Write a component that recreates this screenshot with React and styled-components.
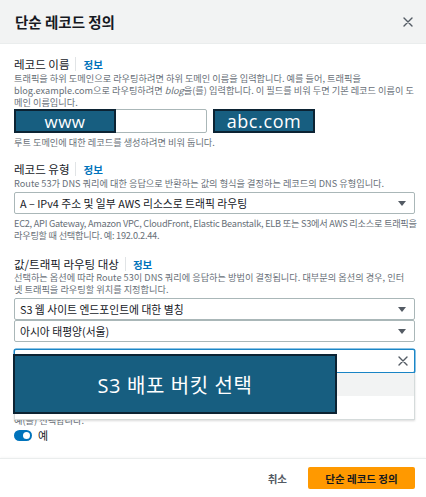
import React from "react";
import styled, { createGlobalStyle } from "styled-components";

const GlobalStyle = createGlobalStyle`
  body {
    margin: 0;
    background: #ffffff;
    font-family: "Noto Sans CJK KR", "Open Sans", sans-serif;
    color: #16191f;
  }
`;

const Modal = styled.div`
  width: 426px;
  height: 497px;
  display: flex;
  flex-direction: column;
  overflow: hidden;
`;

const Header = styled.div`
  height: 43px;
  flex-shrink: 0;
  display: flex;
  align-items: center;
  justify-content: space-between;
  padding: 0 13px 0 15px;
  background: #f2f3f3;
  border-bottom: 1px solid #eaeded;
`;

const Title = styled.h2`
  margin: 0;
  font-size: 14.5px;
  font-weight: 700;
  font-family: "Noto Sans CJK KR", sans-serif;
  color: #16191f;
`;

const CloseButton = styled.button`
  border: none;
  background: none;
  padding: 0;
  display: flex;
  cursor: pointer;
`;

const Body = styled.div`
  flex: 1;
  padding: 0 11px 0 14px;
`;

const Field = styled.div`
  margin-top: ${({ top }) => top}px;
`;

const LabelRow = styled.div`
  display: flex;
  align-items: center;
  height: 14px;
`;

const Label = styled.span`
  font-size: 11.5px;
  color: #16191f;
  font-family: "Noto Sans CJK KR", sans-serif;
`;

const Divider = styled.span`
  width: 1px;
  height: 14px;
  background: #e1e4e6;
  margin: 0 7px 0 6px;
`;

const InfoLink = styled.a`
  font-size: 10.5px;
  font-weight: 700;
  color: #0073bb;
  font-family: "Noto Sans CJK KR", sans-serif;
`;

const Desc = styled.div`
  font-size: 9.2px;
  line-height: 12px;
  color: #687078;
  white-space: nowrap;
  letter-spacing: ${({ tight }) => (tight ? "-0.25px" : "0")};
  font-family: "Noto Sans CJK KR", sans-serif;
  margin-top: ${({ top }) => top || 0}px;
`;

const InputRow = styled.div`
  display: flex;
  align-items: center;
  gap: 6px;
  margin-top: 1px;
`;

const InputBox = styled.div`
  position: relative;
  box-sizing: border-box;
  width: ${({ width }) => width || "100%"};
  height: 24px;
  background: #fff;
  border: 1px solid ${({ focused }) => (focused ? "#1a86c7" : "#aab7b8")};
  box-shadow: ${({ focused }) => (focused ? "0 0 0 0.5px #1a86c7" : "none")};
  border-radius: 2px;
  display: flex;
  align-items: center;
  justify-content: flex-end;
  padding-right: 6px;
`;

const Callout = styled.div`
  box-sizing: border-box;
  width: ${({ width }) => width}px;
  height: ${({ height }) => height}px;
  background: #175e80;
  border: 2px solid #0c2333;
  color: #ffffff;
  font-size: ${({ size }) => size}px;
  letter-spacing: ${({ spacing }) => spacing || 0}px;
  font-family: "Open Sans", "Noto Sans CJK KR", sans-serif;
  display: flex;
  align-items: center;
  justify-content: center;
  flex-shrink: 0;
`;

const OverlayCallout = styled(Callout)`
  position: absolute;
  left: ${({ left }) => left}px;
  top: ${({ offset }) => offset}px;
  z-index: 3;
`;

const Select = styled.div`
  box-sizing: border-box;
  height: 22px;
  border: 1px solid #aab7b8;
  border-radius: 2px;
  background: #fff;
  display: flex;
  align-items: center;
  justify-content: space-between;
  padding: 0 8px 0 5px;
  font-size: 10.8px;
  color: #16191f;
  font-family: "Noto Sans CJK KR", sans-serif;
  margin-top: ${({ top }) => top || 0}px;
`;

const Caret = styled.span`
  width: 0;
  height: 0;
  border-left: 4px solid transparent;
  border-right: 4px solid transparent;
  border-top: 5px solid #545b64;
`;

const Dropdown = styled.div`
  position: absolute;
  left: -1px;
  right: -1px;
  top: 100%;
  margin-top: 1px;
  background: #fff;
  border: 1px solid #d5dbdb;
  border-top: none;
  box-shadow: 0 1px 2px rgba(0, 0, 0, 0.15);
  z-index: 2;
`;

const Option = styled.div`
  height: 23px;
  background: ${({ active }) => (active ? "#f2f3f3" : "#ffffff")};
`;

const ToggleRow = styled.div`
  display: flex;
  align-items: center;
  gap: 6px;
  margin-top: 2px;
  height: 14px;
  font-size: 11px;
  font-family: "Noto Sans CJK KR", sans-serif;
`;

const Toggle = styled.span`
  position: relative;
  width: 18px;
  height: 11px;
  border-radius: 6px;
  background: #0073bb;

  &::after {
    content: "";
    position: absolute;
    right: 2px;
    top: 2px;
    width: 7px;
    height: 7px;
    border-radius: 50%;
    background: #fff;
  }
`;

const Footer = styled.div`
  height: 39px;
  flex-shrink: 0;
  box-sizing: border-box;
  border-top: 1px solid #eaeded;
  box-shadow: 0 -1px 2px rgba(0, 0, 0, 0.03);
  display: flex;
  align-items: center;
  justify-content: flex-end;
  gap: 21px;
  padding: 0 11px 0 14px;
`;

const LinkButton = styled.button`
  border: none;
  background: none;
  padding: 0;
  font-size: 10.5px;
  font-weight: 700;
  color: #545b64;
  font-family: "Noto Sans CJK KR", sans-serif;
`;

const PrimaryButton = styled.button`
  width: 107px;
  height: 22px;
  border: none;
  border-radius: 2px;
  background: #ff9900;
  font-size: 10.5px;
  font-weight: 700;
  color: #16191f;
  font-family: "Noto Sans CJK KR", sans-serif;
`;

const XIcon = ({ size = 10, color = "#545b64" }) => (
  <svg width={size} height={size} viewBox="0 0 10 10">
    <path d="M1 1 L9 9 M9 1 L1 9" stroke={color} strokeWidth="1.4" strokeLinecap="round" />
  </svg>
);

const FieldLabel = ({ children }) => (
  <LabelRow>
    <Label>{children}</Label>
    <Divider />
    <InfoLink>정보</InfoLink>
  </LabelRow>
);

export default function App() {
  return (
    <>
      <GlobalStyle />
      <Modal>
        <Header>
          <Title>단순 레코드 정의</Title>
          <CloseButton>
            <XIcon />
          </CloseButton>
        </Header>

        <Body>
          <Field top={13}>
            <FieldLabel>레코드 이름</FieldLabel>
            <Desc top={1}>
              트래픽을 하위 도메인으로 라우팅하려면 하위 도메인 이름을 입력합니다. 예를 들어, 트래픽을
              <br />
              blog.example.com으로 라우팅하려면 <i>blog</i>을(를) 입력합니다. 이 필드를 비워 두면 기본 레코드 이름이 도
              <br />
              메인 이름입니다.
            </Desc>
            <InputRow>
              <InputBox width="193px">
                <OverlayCallout width={102} height={24} size={17} spacing={0.5} left={-1} offset={-1}>
                  www
                </OverlayCallout>
              </InputBox>
              <Callout width={102} height={24} size={18} spacing={0.6}>
                abc.com
              </Callout>
            </InputRow>
            <Desc top={3}>루트 도메인에 대한 레코드를 생성하려면 비워 둡니다.</Desc>
          </Field>

          <Field top={14}>
            <FieldLabel>레코드 유형</FieldLabel>
            <Desc top={1}>
              Route 53가 DNS 쿼리에 대한 응답으로 반환하는 값의 형식을 결정하는 레코드의 DNS 유형입니다.
            </Desc>
            <Select top={3}>
              <span>A – IPv4 주소 및 일부 AWS 리소스로 트래픽 라우팅</span>
              <Caret />
            </Select>
            <Desc top={3} tight>
              EC2, API Gateway, Amazon VPC, CloudFront, Elastic Beanstalk, ELB 또는 S3에서 AWS 리소스로 트래픽을
              <br />
              라우팅할 때 선택합니다. 예: 192.0.2.44.
            </Desc>
          </Field>

          <Field top={16}>
            <FieldLabel>값/트래픽 라우팅 대상</FieldLabel>
            <Desc>
              선택하는 옵션에 따라 Route 53이 DNS 쿼리에 응답하는 방법이 결정됩니다. 대부분의 옵션의 경우, 인터
              <br />
              넷 트래픽을 라우팅할 위치를 지정합니다.
            </Desc>
            <Select top={3}>
              <span>S3 웹 사이트 엔드포인트에 대한 별칭</span>
              <Caret />
            </Select>
            <Select>
              <span>아시아 태평양(서울)</span>
              <Caret />
            </Select>
            <Field top={7}>
              <InputBox focused>
                <XIcon size={10} />
                <Dropdown>
                  <Option active />
                  <Option />
                </Dropdown>
                <OverlayCallout width={324} height={60} size={20} spacing={0.6} left={-2} offset={4}>
                  S3 배포 버킷 선택
                </OverlayCallout>
              </InputBox>
            </Field>
          </Field>

          <Field top={15}>
            <LabelRow>
              <Label>대상 상태 평가</Label>
            </LabelRow>
            <Desc>대상 리소스의 상태를 확인하여 Route 53이 응답하도록 하려면</Desc>
            <Desc>예(를) 선택합니다.</Desc>
            <ToggleRow>
              <Toggle />
              <span>예</span>
            </ToggleRow>
          </Field>
        </Body>

        <Footer>
          <LinkButton>취소</LinkButton>
          <PrimaryButton>단순 레코드 정의</PrimaryButton>
        </Footer>
      </Modal>
    </>
  );
}
